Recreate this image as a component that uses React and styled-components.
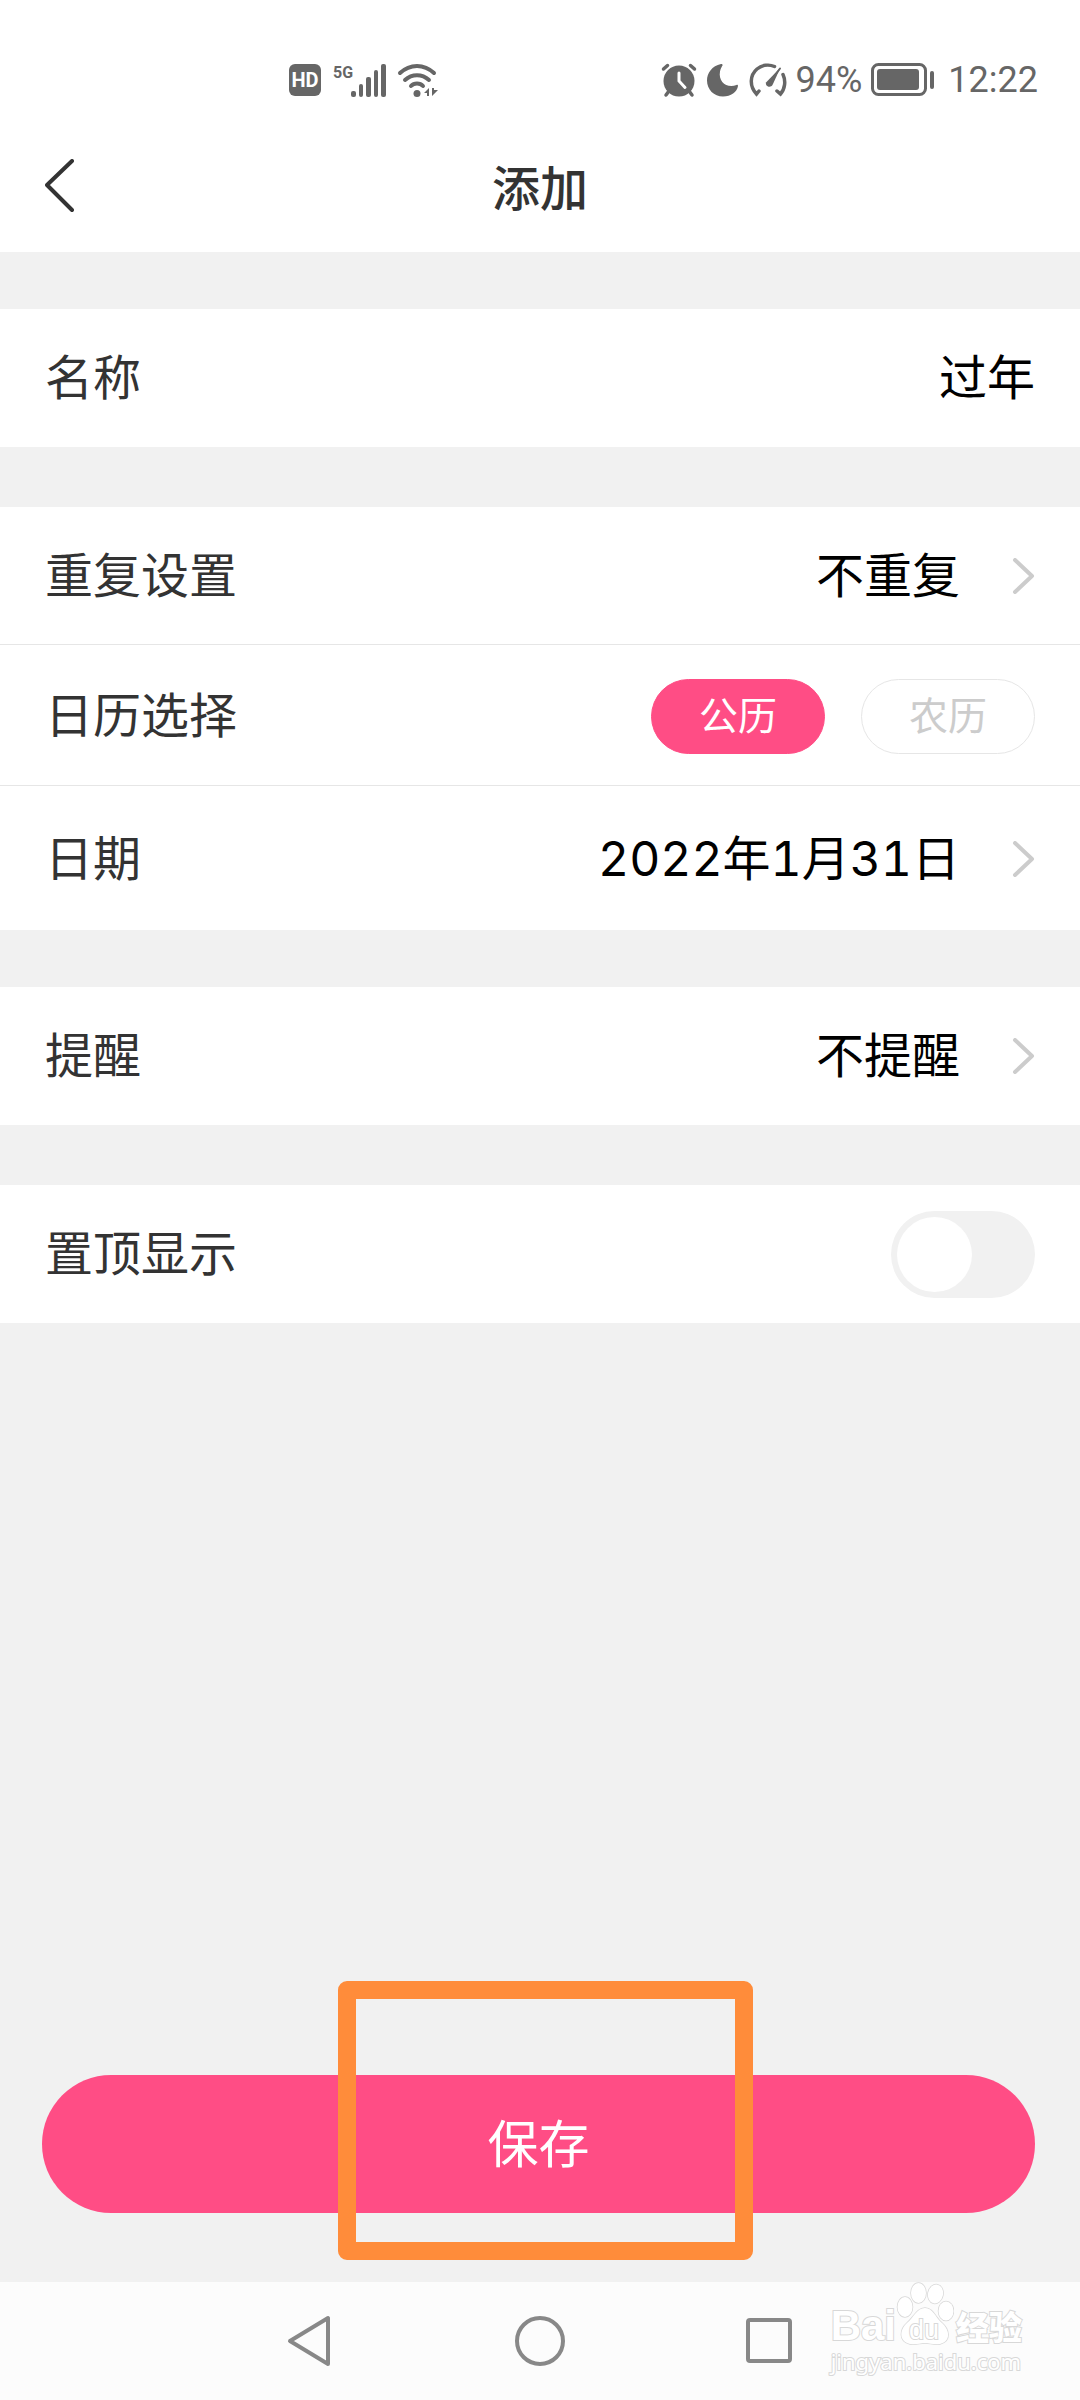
import React, {useState} from "react";
import styled, {createGlobalStyle} from "styled-components";

const GlobalStyle = createGlobalStyle`
    * {
        box-sizing: border-box;
    }

    body {
        margin: 0;
        background-color: #f1f1f1;
        font-family: Inter, "Noto Sans CJK SC", sans-serif;
        color: #333333;
    }

    button, input {
        font: inherit;
        color: inherit;
        margin: 0;
        padding: 0;
        border: none;
        background: none;
    }

    svg {
        display: block;
        flex: none;
    }
`;

const Page = styled.div`
    min-height: 100vh;
    display: flex;
    flex-direction: column;
`;

const StatusBar = styled.div`
    height: 120px;
    padding: 40px 42px 0 289px;
    display: flex;
    justify-content: space-between;
    align-items: center;
    background-color: #ffffff;
    color: #666666;
    font-family: Roboto, sans-serif;
    font-size: 36px;
    line-height: 40px;
`;

const StatusGroup = styled.div`
    display: flex;
    align-items: center;
    gap: ${props => props.$gap}px;
`;

const HdBadge = styled.span`
    width: 32px;
    height: 32px;
    border-radius: 6px;
    background-color: #666666;
    color: #ffffff;
    font-size: 20px;
    font-weight: 700;
    line-height: 32px;
    text-align: center;
`;

const Clock = styled.span`
    margin-left: 4px;
`;

const Header = styled.header`
    height: 132px;
    padding: 0 45px;
    display: grid;
    grid-template-columns: 48px 1fr 48px;
    align-items: center;
    background-color: #ffffff;

    h1 {
        margin: 0;
        padding-top: 6px;
        font-size: 48px;
        font-weight: 500;
        line-height: 72px;
        text-align: center;
    }
`;

const Form = styled.main`
    flex: 1;
    display: flex;
    flex-direction: column;
`;

const Group = styled.section`
    margin-top: ${props => props.$gap}px;
    background-color: #ffffff;
`;

const Row = styled.div`
    width: 100%;
    min-height: ${props => props.$height || 138}px;
    padding: 0 45px;
    display: flex;
    justify-content: space-between;
    align-items: center;
    font-size: 48px;
    line-height: 72px;
    text-align: left;

    & + & {
        padding-top: 2px;
        border-top: 1px solid #e6e6e6;
    }
`;

const Value = styled.span`
    display: flex;
    align-items: center;
    gap: 51px;
    color: #000000;
    font-variant-numeric: tabular-nums;
`;

const NameInput = styled.input`
    flex: 1;
    min-width: 0;
    height: 72px;
    color: #000000;
    text-align: right;
    outline: none;
`;

const Pills = styled.div`
    display: flex;
    gap: 36px;
`;

const Pill = styled.label`
    position: relative;
    width: 174px;
    height: 75px;
    display: flex;
    justify-content: center;
    align-items: center;
    border: 1px solid ${props => props.$active ? "#ff4d85" : "#e6e6e6"};
    border-radius: 38px;
    background-color: ${props => props.$active ? "#ff4d85" : "#ffffff"};
    color: ${props => props.$active ? "#ffffff" : "#cccccc"};
    font-size: 39px;
    cursor: pointer;

    input {
        position: absolute;
        opacity: 0;
    }
`;

const Switch = styled.input`
    appearance: none;
    width: 144px;
    height: 87px;
    padding: 6px;
    display: flex;
    border-radius: 44px;
    background-color: ${props => props.checked ? "#ff4d85" : "#f1f1f1"};
    justify-content: ${props => props.checked ? "flex-end" : "flex-start"};
    cursor: pointer;

    &::before {
        content: "";
        width: 75px;
        height: 75px;
        border-radius: 50%;
        background-color: #ffffff;
    }
`;

const SaveArea = styled.div`
    position: relative;
    margin-top: auto;
    padding: 0 45px 69px 42px;
`;

const SaveButton = styled.button`
    width: 100%;
    height: 138px;
    padding-top: 2px;
    border-radius: 69px;
    background-color: #ff4d85;
    color: #ffffff;
    font-size: 51px;
    line-height: 72px;
    cursor: pointer;
`;

const Highlight = styled.div`
    position: absolute;
    top: -94px;
    left: calc(50% - 202px);
    width: 415px;
    height: 279px;
    border: 18px solid #ff8c3a;
    border-radius: 9px;
    pointer-events: none;
`;

const NavBar = styled.nav`
    position: relative;
    height: 118px;
    display: flex;
    justify-content: center;
    align-items: center;
    gap: 170px;
    background-color: #fcfcfc;
`;

const NavButton = styled.button`
    width: 60px;
    height: 60px;
`;

const Watermark = styled.div`
    position: absolute;
    right: 58px;
    bottom: 24px;
    display: flex;
    flex-direction: column;
    color: #ffffff;
    -webkit-text-stroke: 2px #d8d8d8;
    paint-order: stroke fill;
`;

const WatermarkLogo = styled.div`
    height: 66px;
    display: flex;
    align-items: flex-end;
    font-family: "Liberation Sans", sans-serif;
    font-size: 42px;
    font-weight: 700;
    line-height: 40px;

    em {
        padding-left: 2px;
        font-family: "Noto Sans CJK SC", sans-serif;
        font-size: 33px;
        font-style: normal;
        font-weight: 900;
    }
`;

const WatermarkUrl = styled.span`
    font-family: "Noto Sans", sans-serif;
    font-size: 22px;
    line-height: 30px;
`;

function SignalIcon() {
    return (
        <svg width="54" height="36" viewBox="0 0 54 36" fill="#666666">
            <text x="1" y="16" fontFamily="Liberation Sans Narrow, Roboto, sans-serif" fontSize="16" fontWeight="700">5G</text>
            <rect x="19" y="29" width="5" height="6" rx="2"/>
            <rect x="27" y="22" width="4" height="13" rx="2"/>
            <rect x="34" y="15" width="5" height="20" rx="2"/>
            <rect x="42" y="8" width="4" height="27" rx="2"/>
            <rect x="49" y="2" width="5" height="33" rx="2"/>
        </svg>
    );
}

function WifiIcon() {
    return (
        <svg width="42" height="36" viewBox="0 0 42 36" fill="none" stroke="#666666" strokeWidth="4" strokeLinecap="round">
            <path d="M3 11 C13 1.500 27 1.500 37 11"/>
            <path d="M8 18 C15 11.500 25 11.500 32 18"/>
            <path d="M14 24 C17 20.500 23 20.500 26 24"/>
            <circle cx="20" cy="31.500" r="3.500" fill="#666666" stroke="none"/>
            <path d="M32 26 V34 H30 V31 H27 Z M35 26 V34 L41 28 H37 V26 Z" fill="#666666" stroke="none"/>
        </svg>
    );
}

function AlarmIcon() {
    return (
        <svg width="36" height="36" viewBox="0 0 36 36" fill="none" stroke="#666666" strokeWidth="4" strokeLinecap="round">
            <circle cx="18" cy="19" r="15.500" fill="#666666" stroke="none"/>
            <path d="M2.500 7 L6.500 3.500 M33.500 7 L29.500 3.500" strokeWidth="3.500"/>
            <path d="M8 29 L5 33 M28 29 L31 33" strokeWidth="3.500"/>
            <path d="M18 11 V19 L24 25.500" stroke="#ffffff" strokeWidth="3"/>
        </svg>
    );
}

function MoonIcon() {
    return (
        <svg width="34" height="36" viewBox="0 0 34 36" fill="#666666">
            <path d="M15 2 C6 4 1 11 1 18.500 C1 27.500 8 34.500 17 34.500 C25 34.500 31 30 32 24 C32 23 31.300 22.600 30.500 23 C21 26.500 12 20 14 9.500 C14.500 7 15.500 5 16.500 3.500 C17 2.500 16 1.800 15 2 Z"/>
        </svg>
    );
}

function GaugeIcon() {
    return (
        <svg width="38" height="36" viewBox="0 0 38 36" fill="none" stroke="#666666" strokeWidth="3.500" strokeLinecap="round">
            <path d="M10 29 L7.500 32 C0 24 1 13 8 7 C13 3 20 2 25.500 4.500"/>
            <path d="M34 12.500 C37 19 36 27 31.500 32 L28 29"/>
            <path d="M31.500 5.500 L23.500 23 C22 26 16 25 17 20.500 Z" fill="#666666" stroke="none"/>
            <path d="M31 6.500 L20 21.500" strokeWidth="2"/>
        </svg>
    );
}

function BatteryIcon() {
    return (
        <svg width="64" height="34" viewBox="0 0 64 34">
            <rect x="1.500" y="1.500" width="53" height="30" rx="6" fill="none" stroke="#666666" strokeWidth="3"/>
            <rect x="6" y="6" width="42" height="21" rx="3" fill="#666666"/>
            <rect x="59" y="8" width="4" height="18" rx="2" fill="#666666"/>
        </svg>
    );
}

function Chevron() {
    return (
        <svg width="24" height="36" viewBox="0 0 24 36" fill="none" stroke="#cccccc" strokeWidth="4" strokeLinecap="round" strokeLinejoin="round">
            <path d="M4 2 L21 18 L4 34"/>
        </svg>
    );
}

function LinkRow({label, value, height}) {
    return (
        <Row as="button" type="button" $height={height}>
            <span>{label}</span>
            <Value>{value}<Chevron/></Value>
        </Row>
    );
}

function Paw() {
    return (
        <svg width="58" height="64" viewBox="0 0 58 64" fill="#ffffff" stroke="#d8d8d8" strokeWidth="1.500">
            <ellipse cx="9" cy="25" rx="7.500" ry="10"/>
            <ellipse cx="22.500" cy="11" rx="7.500" ry="10"/>
            <ellipse cx="39.500" cy="12" rx="7.500" ry="9.500" transform="rotate(12 39.500 12)"/>
            <ellipse cx="50" cy="29" rx="7.500" ry="9.500"/>
            <path d="M29 26 C37 26 39 35 46 41 C53 47 56 59 44 62 C38 63 34 61 29 61 C24 61 20 63 14 62 C2 59 4 47 11 41 C18 35 21 26 29 26 Z"/>
            <text x="13" y="57" fontFamily="Liberation Sans, sans-serif" fontSize="27" fontWeight="400" strokeWidth="2">du</text>
        </svg>
    );
}

function App() {

    const [name, setName] = useState("过年");
    const [calendar, setCalendar] = useState("公历");
    const [pinned, setPinned] = useState(false);

    return (
        <Page>
            <GlobalStyle/>
            <StatusBar>
                <StatusGroup $gap={11}>
                    <HdBadge>HD</HdBadge>
                    <SignalIcon/>
                    <WifiIcon/>
                </StatusGroup>
                <StatusGroup $gap={9}>
                    <AlarmIcon/>
                    <MoonIcon/>
                    <GaugeIcon/>
                    <span>94%</span>
                    <BatteryIcon/>
                    <Clock>12:22</Clock>
                </StatusGroup>
            </StatusBar>
            <Header>
                <button type="button" aria-label="返回">
                    <svg width="30" height="54" viewBox="0 0 30 54" fill="none" stroke="#333333" strokeWidth="4" strokeLinecap="round" strokeLinejoin="round">
                        <path d="M27 2 L2 26 L27 51"/>
                    </svg>
                </button>
                <h1>添加</h1>
            </Header>
            <Form>
                <Group $gap={57}>
                    <Row>
                        <label htmlFor="name">名称</label>
                        <NameInput id="name" value={name} onChange={event => setName(event.target.value)}/>
                    </Row>
                </Group>
                <Group $gap={60}>
                    <LinkRow label="重复设置" value="不重复" height={137}/>
                    <Row $height={141}>
                        <span id="calendar">日历选择</span>
                        <Pills role="radiogroup" aria-labelledby="calendar">
                            {["公历", "农历"].map(item => (
                                <Pill key={item} $active={calendar === item}>
                                    <input type="radio" name="calendar" checked={calendar === item} onChange={() => setCalendar(item)}/>
                                    {item}
                                </Pill>
                            ))}
                        </Pills>
                    </Row>
                    <LinkRow label="日期" value="2022年1月31日" height={145}/>
                </Group>
                <Group $gap={57}>
                    <LinkRow label="提醒" value="不提醒"/>
                </Group>
                <Group $gap={60}>
                    <Row>
                        <label htmlFor="pinned">置顶显示</label>
                        <Switch id="pinned" type="checkbox" checked={pinned} onChange={event => setPinned(event.target.checked)}/>
                    </Row>
                </Group>
                <SaveArea>
                    <SaveButton type="button">保存</SaveButton>
                    <Highlight/>
                </SaveArea>
            </Form>
            <NavBar>
                <NavButton type="button" aria-label="后退">
                    <svg width="60" height="60" viewBox="0 0 60 60" fill="none" stroke="#888888" strokeWidth="4" strokeLinejoin="round">
                        <path d="M10 30 L48 7 V53 Z"/>
                    </svg>
                </NavButton>
                <NavButton type="button" aria-label="主页">
                    <svg width="60" height="60" viewBox="0 0 60 60" fill="none" stroke="#888888" strokeWidth="4">
                        <circle cx="30" cy="30" r="23"/>
                    </svg>
                </NavButton>
                <NavButton type="button" aria-label="最近任务">
                    <svg width="60" height="60" viewBox="0 0 60 60" fill="none" stroke="#888888" strokeWidth="4">
                        <rect x="8" y="9" width="42" height="41" rx="2"/>
                    </svg>
                </NavButton>
                <Watermark>
                    <WatermarkLogo>Bai<Paw/><em>经验</em></WatermarkLogo>
                    <WatermarkUrl>jingyan.baidu.com</WatermarkUrl>
                </Watermark>
            </NavBar>
        </Page>
    );

}

export default App;
